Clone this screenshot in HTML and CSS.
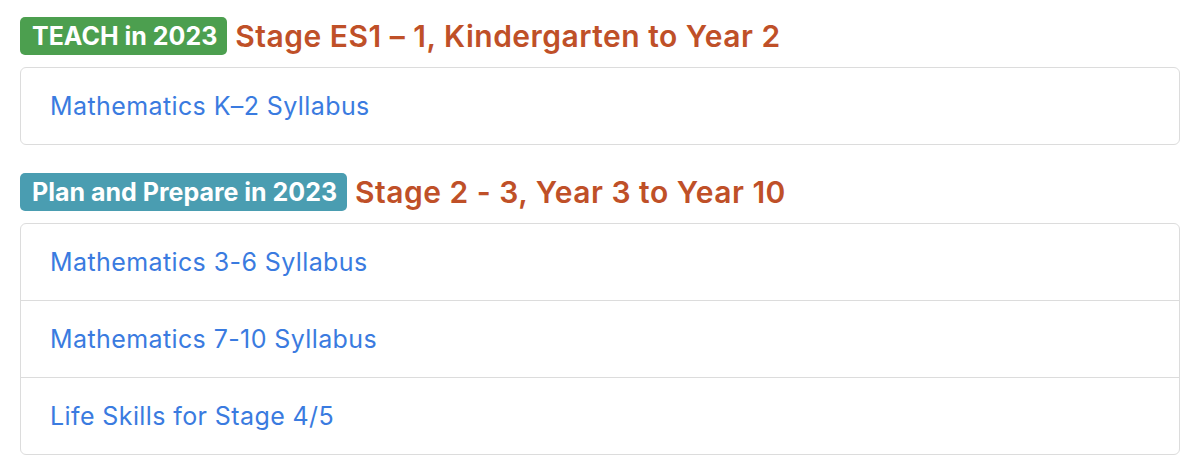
FILE: index.html
```html
<!DOCTYPE html>
<html lang="en">
<head>
<meta charset="utf-8">
<title>Mathematics Syllabus</title>
<link rel="stylesheet" href="styles.css">
</head>
<body>
<main class="page">
  <section class="section">
    <h2 class="heading">
      <span class="badge badge-success">TEACH in 2023</span>
      <span class="title">Stage ES1 – 1, Kindergarten to Year 2</span>
    </h2>
    <ul class="list">
      <li class="item"><a href="#">Mathematics K–2 Syllabus</a></li>
    </ul>
  </section>
  <section class="section">
    <h2 class="heading">
      <span class="badge badge-info">Plan and Prepare in 2023</span>
      <span class="title">Stage 2 - 3, Year 3 to Year 10</span>
    </h2>
    <ul class="list">
      <li class="item"><a href="#">Mathematics 3-6 Syllabus</a></li>
      <li class="item"><a href="#">Mathematics 7-10 Syllabus</a></li>
      <li class="item"><a href="#">Life Skills for Stage 4/5</a></li>
    </ul>
  </section>
</main>
</body>
</html>
```

FILE: styles.css
```css
* { box-sizing: border-box; }
body {
  margin: 0;
  background: #fff;
  font-family: "Inter", "Roboto", "Liberation Sans", sans-serif;
}
.page {
  padding: 17px 20px;
}
.section + .section {
  margin-top: 28px;
}
.heading {
  display: flex;
  align-items: center;
  gap: 8px;
  margin: 0 0 12px;
  font-weight: 500;
}
.badge {
  display: inline-block;
  height: 38px;
  line-height: 38px;
  padding: 0 10px 0 12px;
  border-radius: 5px;
  color: #fff;
  font-size: 25px;
  font-weight: 700;
  white-space: nowrap;
}
.badge-success { background: #4c9f4f; }
.badge-info { background: #4a9db1; }
.title {
  color: #bf5028;
  font-size: 30px;
  font-weight: 600;
  letter-spacing: 0.5px;
  line-height: 38px;
}
.list {
  list-style: none;
  margin: 0;
  padding: 0;
  border: 1px solid #dcdcdc;
  border-radius: 6px;
}
.item {
  padding: 20px 29px;
  line-height: 36px;
  font-size: 25px;
  letter-spacing: 0.4px;
}
.item + .item {
  border-top: 1px solid #dcdcdc;
}
.item a {
  color: #3a7be0;
  text-decoration: none;
}
```
